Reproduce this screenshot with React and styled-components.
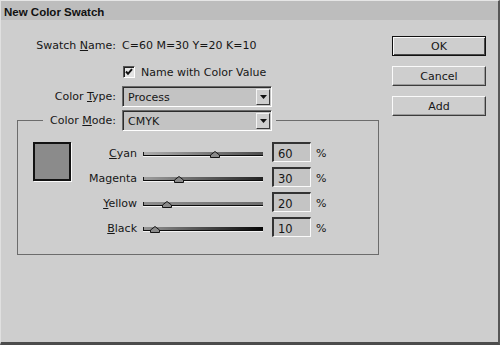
import React from "react";
import styled, { createGlobalStyle } from "styled-components";

const GlobalStyle = createGlobalStyle`
  html, body {
    margin: 0;
    padding: 0;
    background: #cecece;
  }
  body {
    font-family: "DejaVu Sans", Verdana, sans-serif;
    font-size: 11px;
    color: #161616;
  }
`;

const Window = styled.div`
  width: 500px;
  height: 345px;
  box-sizing: border-box;
  background: #cecece;
  border-top: 1px solid #e6e6e6;
  border-left: 1px solid #e0e0e0;
  border-right: 2px solid #575757;
  border-bottom: 3px solid #4c4c4c;
  display: flex;
  flex-direction: column;
`;

const TitleBar = styled.div`
  height: 19px;
  flex-shrink: 0;
  background: #bdbdbd;
  padding: 2px 0 0 3px;
  box-sizing: border-box;
  display: flex;
  align-items: center;
  font-family: "Liberation Sans", Arial, sans-serif;
  font-weight: bold;
  font-size: 11.5px;
  color: #111;
`;

const Body = styled.div`
  display: flex;
  flex: 1;
`;

const Form = styled.div`
  width: 362px;
  padding: 15px 0 0 16px;
  display: flex;
  flex-direction: column;
`;

const Row = styled.div`
  display: flex;
  align-items: center;
  height: ${(p) => p.$height || 20}px;
  margin-top: ${(p) => p.$top || 0}px;
`;

const Label = styled.div`
  width: ${(p) => p.$width || 99}px;
  flex-shrink: 0;
  text-align: right;
  margin-right: 6px;
  white-space: nowrap;
`;

const Key = styled.span`
  text-decoration: underline;
  text-underline-offset: 1px;
`;

const Check = styled.div`
  width: 12px;
  height: 12px;
  box-sizing: border-box;
  margin-left: 1px;
  border-style: solid;
  border-width: 1px;
  border-color: #555 #fff #fff #555;
  box-shadow: inset 1px 1px 0 #222;
  background: #e4e4e4;
  display: flex;
  align-items: center;
  justify-content: center;
`;

const CheckText = styled.span`
  margin-left: 6px;
`;

const Select = styled.div`
  width: 150px;
  height: 21px;
  box-sizing: border-box;
  border-style: solid;
  border-width: 1px;
  border-color: #6a6a6a #fff #fff #6a6a6a;
  box-shadow: inset 1px 1px 0 #2c2c2c;
  background: #c3c3c3;
  display: flex;
  align-items: center;
  padding: 0 1px 0 5px;
`;

const SelectText = styled.span`
  flex: 1;
  padding-top: 1px;
`;

const ArrowButton = styled.div`
  width: 14px;
  height: 16px;
  box-sizing: border-box;
  border-style: solid;
  border-width: 1px;
  border-color: #f4f4f4 #3a3a3a #3a3a3a #f4f4f4;
  background: #cecece;
  display: flex;
  align-items: center;
  justify-content: center;
`;

const Group = styled.fieldset`
  margin: 3px 0 0 0;
  width: 362px;
  box-sizing: border-box;
  border: 1px solid #6c6c6c;
  padding: 11px 0 17px 15px;
  display: flex;
  min-width: 0;
`;

const Legend = styled.legend`
  margin-left: 10px;
  padding: 0 4px 0 3px;
  display: flex;
  align-items: center;
`;

const Swatch = styled.div`
  width: 38px;
  height: 39px;
  box-sizing: border-box;
  border: 2px solid #121212;
  box-shadow: 1px 1px 0 #fafafa;
  background: ${(p) => p.$fill};
  flex-shrink: 0;
`;

const Sliders = styled.div`
  display: flex;
  flex-direction: column;
  gap: 5px;
`;

const SliderRow = styled.div`
  display: flex;
  align-items: center;
  height: 20px;
`;

const SliderLabel = styled.div`
  width: 66px;
  text-align: right;
  padding-top: 3px;
`;

const Track = styled.div`
  position: relative;
  width: 120px;
  height: 20px;
  margin-left: 6px;
`;

const Bar = styled.div`
  position: absolute;
  top: 10px;
  left: 0;
  right: 0;
  height: 3px;
  border-left: 1px solid #1a1a1a;
  border-bottom: 1px solid #0c0c0c;
  box-shadow: 0 1px 0 #f2f2f2;
  background: linear-gradient(to right, ${(p) => p.$from}, ${(p) => p.$to});
`;

const Thumb = styled.svg`
  position: absolute;
  top: 9px;
  margin-left: -5px;
`;

const Value = styled.div`
  width: 39px;
  height: 20px;
  margin-left: 9px;
  box-sizing: border-box;
  border-style: solid;
  border-width: 2px 1px 1px 2px;
  border-color: #333 #fafafa #fafafa #333;
  background: #c4c4c4;
  padding: 3px 0 0 4px;
  font-size: 11.5px;
`;

const Percent = styled.span`
  margin-left: 5px;
  padding-top: 3px;
`;

const Buttons = styled.div`
  margin-left: 13px;
  padding-top: 16px;
  display: flex;
  flex-direction: column;
  gap: 10px;
`;

const Button = styled.div`
  width: 94px;
  height: 20px;
  box-sizing: border-box;
  display: flex;
  align-items: center;
  justify-content: center;
  border-style: solid;
  border-width: 1px;
  border-color: ${(p) => (p.$default ? "#111" : "#fafafa #3c3c3c #3c3c3c #fafafa")};
  box-shadow: ${(p) =>
    p.$default
      ? "inset 1px 1px 0 #fafafa, inset -1px -1px 0 #4a4a4a"
      : "inset -1px -1px 0 #9a9a9a"};
  background: #cecece;
  padding-top: 1px;
`;

const channels = [
  { pre: "", key: "C", post: "yan", value: 60, from: "#adadad", to: "#4c4c4c" },
  { pre: "Ma", key: "g", post: "enta", value: 30, from: "#9e9e9e", to: "#222" },
  { pre: "", key: "Y", post: "ellow", value: 20, from: "#8e8e8e", to: "#6c6c6c" },
  { pre: "", key: "B", post: "lack", value: 10, from: "#959595", to: "#050505" },
];

function DropArrow() {
  return (
    <svg width="7" height="4" viewBox="0 0 7 4">
      <polygon points="0,0 7,0 3.5,4" fill="#111" />
    </svg>
  );
}

function ColorSelect({ value }) {
  return (
    <Select>
      <SelectText>{value}</SelectText>
      <ArrowButton>
        <DropArrow />
      </ArrowButton>
    </Select>
  );
}

function Slider({ item }) {
  return (
    <SliderRow>
      <SliderLabel>
        {item.pre}
        <Key>{item.key}</Key>
        {item.post}
      </SliderLabel>
      <Track>
        <Bar $from={item.from} $to={item.to} />
        <Thumb width="10" height="7" viewBox="0 0 10 7" style={{ left: `${item.value}%` }}>
          <polygon points="0.5,6.5 0.5,4 5,0.5 9.5,4 9.5,6.5" fill="#8a8a8a" stroke="#141414" />
        </Thumb>
      </Track>
      <Value>{item.value}</Value>
      <Percent>%</Percent>
    </SliderRow>
  );
}

export default function App() {
  return (
    <>
      <GlobalStyle />
      <Window>
        <TitleBar>New Color Swatch</TitleBar>
        <Body>
          <Form>
            <Row>
              <Label>
                Swatch <Key>N</Key>ame:
              </Label>
              <span>C=60 M=30 Y=20 K=10</span>
            </Row>
            <Row $top={7}>
              <Label />
              <Check>
                <svg width="8" height="8" viewBox="0 0 8 8">
                  <path d="M1 3.5 L3 5.8 L7 1.2" fill="none" stroke="#111" strokeWidth="2" />
                </svg>
              </Check>
              <CheckText>Name with Color Value</CheckText>
            </Row>
            <Row $top={4} $height={21}>
              <Label>
                Color <Key>T</Key>ype:
              </Label>
              <ColorSelect value="Process" />
            </Row>
            <Group>
              <Legend>
                <Label $width={70}>
                  Color <Key>M</Key>ode:
                </Label>
                <ColorSelect value="CMYK" />
              </Legend>
              <Swatch $fill="#8b8b8b" />
              <Sliders>
                {channels.map((c) => (
                  <Slider key={c.key} item={c} />
                ))}
              </Sliders>
            </Group>
          </Form>
          <Buttons>
            <Button $default>OK</Button>
            <Button>Cancel</Button>
            <Button>Add</Button>
          </Buttons>
        </Body>
      </Window>
    </>
  );
}
